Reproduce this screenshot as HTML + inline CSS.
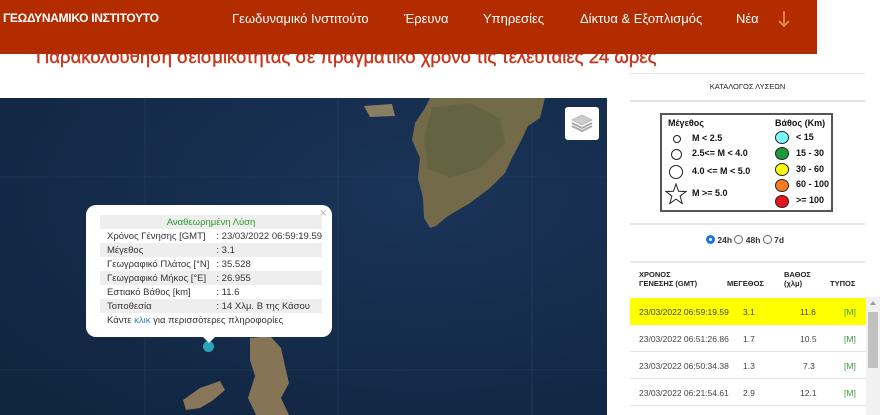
<!DOCTYPE html>
<html><head><meta charset="utf-8"><style>
*{margin:0;padding:0;box-sizing:border-box}
body{width:880px;height:415px;overflow:hidden;background:#fff;font-family:"Liberation Sans","DejaVu Sans",sans-serif;position:relative}
.hdr{position:absolute;left:0;top:0;width:817px;height:54px;background:#b32c00;z-index:5;color:#fff}
.hdr .logo{position:absolute;left:3px;top:11px;font-weight:bold;font-size:12px;letter-spacing:-0.3px}
.hdr .nav{position:absolute;top:11px;font-size:13px}
.title{position:absolute;left:36px;top:46px;font-size:18.5px;color:#c8361a;z-index:1;white-space:nowrap;-webkit-text-stroke:0.4px #c8361a}
.map{position:absolute;left:0;top:98px;width:607px;height:317px;background:#13294a;overflow:hidden}
.popup{position:absolute;left:86px;top:205px;width:246px;height:132px;background:#fff;border-radius:10px;font-size:9.5px;color:#333}
.popup table{position:absolute;left:14px;top:10px;width:215px;border-collapse:collapse}
.popup td{height:14px;padding:0 0 0 7px;white-space:nowrap}
.popup tr.g td{background:#eee}
.r{position:absolute;font-size:8px;color:#222}
.line{position:absolute;left:630px;width:235px;height:1px;background:#e3e3e3}
.lg{position:absolute;left:660px;top:113px;width:173px;height:99px;border:2px solid #555;font-size:9px;font-weight:bold;color:#111}
.dot{position:absolute;width:14px;height:13px;border-radius:50%;border:1px solid #222}
.circ{position:absolute;border:1px solid #222;border-radius:50%}
.tb{position:absolute;left:630px;width:236px;font-size:8.5px;color:#333}
.row{position:absolute;left:630px;width:236px;height:27px;border-bottom:1px solid #e6e6e6;font-size:8.5px;color:#444}
.row span{position:absolute;top:9px}
.row .m{color:#3a9a3a;left:214px}
</style></head><body>
<div class="hdr">
<div class="logo">ΓΕΩΔΥΝΑΜΙΚΟ ΙΝΣΤΙΤΟΥΤΟ</div>
<div class="nav" style="left:232px">Γεωδυναμικό Ινστιτούτο</div>
<div class="nav" style="left:404px">Έρευνα</div>
<div class="nav" style="left:483px">Υπηρεσίες</div>
<div class="nav" style="left:580px">Δίκτυα &amp; Εξοπλισμός</div>
<div class="nav" style="left:736px">Νέα</div>
<svg style="position:absolute;left:777px;top:10px" width="14" height="18"><path d="M7 1V16M2 11L7 16L12 11" stroke="#f09060" stroke-width="1.6" fill="none"/></svg>
</div>
<div class="title">Παρακολούθηση σεισμικότητας σε πραγματικό χρόνο τις τελευταίες 24 ώρες</div>

<div class="map">
<svg width="607" height="317" style="position:absolute;left:0;top:0">
<defs><radialGradient id="sea" cx="0.7" cy="0.3" r="0.9"><stop offset="0" stop-color="#1a3458"/><stop offset="1" stop-color="#102540"/></radialGradient></defs>
<rect width="607" height="317" fill="url(#sea)"/>
<g stroke="#2b4266" stroke-width="0.6"><line x1="145" y1="0" x2="145" y2="317"/><line x1="338" y1="0" x2="338" y2="317"/><line x1="532" y1="0" x2="532" y2="317"/><line x1="0" y1="79" x2="607" y2="79"/><line x1="0" y1="272" x2="607" y2="272"/></g>
<path d="M430 0 L545 0 L540 20 L528 28 L520 45 L512 60 L505 75 L490 90 L470 105 L448 118 L436 128 L430 130 L424 120 L423 100 L418 80 L420 60 L412 42 L415 25 L425 10 Z" fill="#726a48"/>
<path d="M432 10 L470 5 L500 20 L505 45 L480 70 L450 80 L428 70 L424 40 Z" fill="#5f6340" opacity="0.7"/>
<path d="M364 8 L392 6 L395 18 L370 19 Z" fill="#8a7d62"/>
<path d="M250 240 L270 238 L281 250 L285 268 L289 285 L281 300 L289 317 L256 317 L248 300 L255 278 L250 262 Z" fill="#857456"/>
<path d="M183 302 L200 290 L220 283 L225 292 L212 303 L200 310 L186 312 Z" fill="#87765a"/>
</svg>
<div style="position:absolute;left:565px;top:9px;width:34px;height:33px;background:#fff;border-radius:3px">
<svg width="34" height="33"><path d="M17 8L27 13L17 18L7 13Z" fill="#ccc" stroke="#bbb"/><path d="M7 16L17 21L27 16" fill="none" stroke="#aaa" stroke-width="2"/><path d="M7 19L17 24L27 19" fill="none" stroke="#aaa" stroke-width="2"/></svg></div>
<div style="position:absolute;left:203px;top:243px;width:11px;height:11px;border-radius:50%;background:#2aa4b8"></div>
</div>

<div class="popup">
<div style="position:absolute;right:5px;top:0px;color:#bbb;font-size:13px">×</div>
<table>
<tr class="g"><td colspan="2" style="text-align:center;color:#2c9a2c;padding:0">Αναθεωρημένη Λύση</td></tr>
<tr><td>Χρόνος Γένησης [GMT]</td><td>: 23/03/2022 06:59:19.59</td></tr>
<tr class="g"><td>Μέγεθος</td><td>: 3.1</td></tr>
<tr><td>Γεωγραφικό Πλάτος [°N]</td><td>: 35.528</td></tr>
<tr class="g"><td>Γεωγραφικό Μήκος [°E]</td><td>: 26.955</td></tr>
<tr><td>Εστιακό Βάθος [km]</td><td>: 11.6</td></tr>
<tr class="g"><td>Τοποθεσία</td><td>: 14 Χλμ. Β της Κάσου</td></tr>
<tr><td colspan="2">Κάντε <span style="color:#2a8ac0">κλικ</span> για περισσότερες πληροφορίες</td></tr>
</table>
<div style="position:absolute;left:116px;top:131px;width:0;height:0;border-left:7px solid transparent;border-right:7px solid transparent;border-top:7px solid #fff"></div>
</div>

<div class="line" style="top:73px"></div>
<div class="r" style="left:630px;width:235px;text-align:center;top:82px;font-size:7.5px">ΚΑΤΑΛΟΓΟΣ ΛΥΣΕΩΝ</div>
<div class="line" style="top:100px;height:2px;background:#dfe3e8"></div>
<div class="lg">
<div style="position:absolute;left:6px;top:3px">Μέγεθος</div>
<div style="position:absolute;left:113px;top:3px">Βάθος (Km)</div>
<div class="circ" style="left:11px;top:20px;width:8px;height:8px"></div><div style="position:absolute;left:30px;top:18px">M &lt; 2.5</div>
<div class="circ" style="left:9px;top:34px;width:11px;height:11px"></div><div style="position:absolute;left:30px;top:33px">2.5&lt;= M &lt; 4.0</div>
<div class="circ" style="left:7px;top:50px;width:14px;height:14px"></div><div style="position:absolute;left:30px;top:51px">4.0 &lt;= M &lt; 5.0</div>
<svg style="position:absolute;left:3px;top:68px" width="22" height="22"><path d="M11 1L13.6 8.3L21 8.5L15.1 13.1L17.2 20.5L11 16.1L4.8 20.5L6.9 13.1L1 8.5L8.4 8.3Z" fill="none" stroke="#222"/></svg>
<div style="position:absolute;left:30px;top:73px">M &gt;= 5.0</div>
<div class="dot" style="left:113px;top:16px;background:#7ff"></div><div style="position:absolute;left:134px;top:17px">&lt; 15</div>
<div class="dot" style="left:113px;top:32px;background:#1f9a3a"></div><div style="position:absolute;left:134px;top:33px">15 - 30</div>
<div class="dot" style="left:113px;top:48px;background:#ff0"></div><div style="position:absolute;left:134px;top:49px">30 - 60</div>
<div class="dot" style="left:113px;top:64px;background:#fb7b22"></div><div style="position:absolute;left:134px;top:64px">60 - 100</div>
<div class="dot" style="left:113px;top:80px;background:#e8141c"></div><div style="position:absolute;left:134px;top:80px">&gt;= 100</div>
</div>
<div class="line" style="top:223px;height:2px;background:#e6e8ec"></div>
<div class="r" style="left:706px;top:235px;font-size:8.5px;font-weight:bold;color:#333"><span style="display:inline-block;width:9px;height:9px;border-radius:50%;border:3px solid #1a73e8;vertical-align:-1px"></span> 24h <span style="display:inline-block;width:9px;height:9px;border-radius:50%;border:1px solid #666;vertical-align:-1px"></span> 48h <span style="display:inline-block;width:9px;height:9px;border-radius:50%;border:1px solid #666;vertical-align:-1px"></span> 7d</div>
<div class="line" style="top:261px;height:2px;background:#e6e8ec"></div>
<div class="tb" style="top:270px;font-weight:bold;font-size:7.5px;color:#222">
<div style="position:absolute;left:9px;line-height:9px">ΧΡΟΝΟΣ<br>ΓΕΝΕΣΗΣ (GMT)</div>
<div style="position:absolute;left:97px;top:9px">ΜΕΓΕΘΟΣ</div>
<div style="position:absolute;left:154px;line-height:9px">ΒΑΘΟΣ<br>(χλμ)</div>
<div style="position:absolute;left:200px;top:9px">ΤΥΠΟΣ</div>
</div>
<div class="row" style="top:298px;background:#ffff00;border:none"><span style="left:9px">23/03/2022 06:59:19.59</span><span style="left:113px">3.1</span><span style="left:170px">11.6</span><span class="m">[M]</span></div>
<div class="row" style="top:325px"><span style="left:9px">23/03/2022 06:51:26.86</span><span style="left:113px">1.7</span><span style="left:170px">10.5</span><span class="m">[M]</span></div>
<div class="row" style="top:352px"><span style="left:9px">23/03/2022 06:50:34.38</span><span style="left:113px">1.3</span><span style="left:173px">7.3</span><span class="m">[M]</span></div>
<div class="row" style="top:379px"><span style="left:9px">23/03/2022 06:21:54.61</span><span style="left:113px">2.9</span><span style="left:170px">12.1</span><span class="m">[M]</span></div>
<div style="position:absolute;left:866px;top:297px;width:14px;height:118px;background:#f1f1f1"></div>
<div style="position:absolute;left:868px;top:312px;width:10px;height:56px;background:#c1c1c1"></div>
<div style="position:absolute;left:870px;top:301px;width:0;height:0;border-left:3px solid transparent;border-right:3px solid transparent;border-bottom:4px solid #999"></div>
</body></html>
